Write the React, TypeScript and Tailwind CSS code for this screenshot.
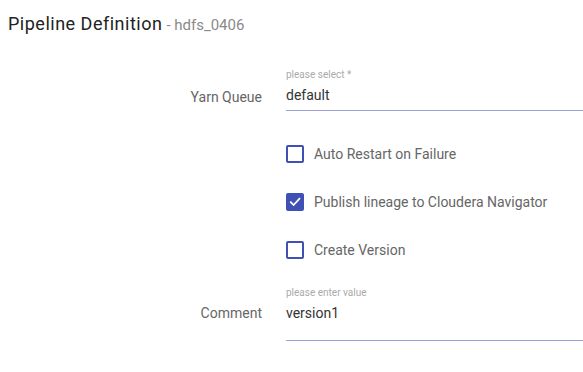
import { useState } from "react";

function Checkbox({ checked, label, onToggle }: { checked: boolean; label: string; onToggle: () => void }) {
  return (
    <div className="flex h-12 items-center gap-[10px]">
      <button
        type="button"
        onClick={onToggle}
        className={`flex h-[18px] w-[18px] items-center justify-center rounded-[2px] border-2 border-[#3f51b5] ${
          checked ? "bg-[#3f51b5]" : "bg-white"
        }`}
      >
        {checked && (
          <svg width="12" height="12" viewBox="0 0 12 12" fill="none">
            <path d="M1.8 6.2 4.6 9 10.4 2.8" stroke="white" strokeWidth="1.7" strokeLinecap="square" />
          </svg>
        )}
      </button>
      <span className="text-[14px] leading-5 text-[#666]">{label}</span>
    </div>
  );
}

export default function App() {
  const [opts, setOpts] = useState({ restart: false, lineage: true, version: false });

  return (
    <div className="h-[372px] w-[583px] overflow-hidden bg-white font-['Roboto',sans-serif]">
      {/* Header */}
      <div className="pl-2 pt-3">
        <span className="text-[18px] leading-6 tracking-[0.5px] text-[#222]">Pipeline Definition</span>
        <span className="ml-[4px] text-[15px] leading-6 text-[#8a8a8a]">- hdfs_0406</span>
      </div>

      <div className="mt-8 grid grid-cols-[262px_1fr] gap-x-6">
        {/* Yarn Queue */}
        <div className="pt-[18px] text-right text-[14px] leading-5 text-[#666]">Yarn Queue</div>
        <div className="border-b border-[#9aa3d9] pb-[5px]">
          <div className="text-[10px] leading-3 text-[#aaa]">please select *</div>
          <div className="mt-1 text-[14px] leading-5 text-[#333]">default</div>
        </div>

        {/* Options */}
        <div />
        <div className="mt-[19px] flex flex-col">
          <Checkbox
            checked={opts.restart}
            label="Auto Restart on Failure"
            onToggle={() => setOpts({ ...opts, restart: !opts.restart })}
          />
          <Checkbox
            checked={opts.lineage}
            label="Publish lineage to Cloudera Navigator"
            onToggle={() => setOpts({ ...opts, lineage: !opts.lineage })}
          />
          <Checkbox
            checked={opts.version}
            label="Create Version"
            onToggle={() => setOpts({ ...opts, version: !opts.version })}
          />
        </div>

        {/* Comment */}
        <div className="mt-[13px] pt-[16px] text-right text-[14px] leading-5 text-[#666]">Comment</div>
        <div className="mt-[13px] border-b border-[#9aa3d9] pb-[17px]">
          <div className="text-[10px] leading-3 text-[#aaa]">please enter value</div>
          <div className="mt-1 text-[14px] leading-5 text-[#333]">version1</div>
        </div>
      </div>
    </div>
  );
}
